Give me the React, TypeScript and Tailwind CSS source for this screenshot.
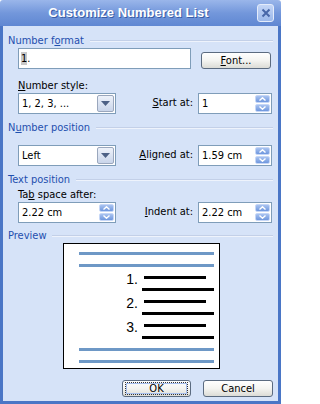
import React from 'react';

const font = { fontFamily: '"DejaVu Sans Condensed", "DejaVu Sans", Tahoma, sans-serif' };

const Heading: React.FC<{ children: React.ReactNode; className?: string }> = ({ children, className }) => (
  <div className={`flex items-center h-[13px] pl-[5px] pr-[5px] ${className ?? ''}`}>
    <span className="text-[#1f4fae] leading-[13px] whitespace-nowrap">{children}</span>
    <div className="flex-1 ml-[6px] border-t border-[#c3d0e8] border-b border-b-[#eef3fc]" />
  </div>
);

const Chevron: React.FC<{ up?: boolean }> = ({ up }) => (
  <svg width="7" height="4" viewBox="0 0 7 4" className="block">
    <path d={up ? 'M0.5 3.5 L3.5 0.8 L6.5 3.5' : 'M0.5 0.5 L3.5 3.2 L6.5 0.5'} stroke="white" strokeWidth="1.4" fill="none" />
  </svg>
);

const Spin: React.FC<{ value: string; className?: string }> = ({ value, className }) => (
  <div className={`flex h-[21px] bg-white border border-[#7f9db9] ${className ?? ''}`}>
    <div className="flex-1 pl-[3px] leading-[19px] text-black">{value}</div>
    <div className="flex flex-col w-[15px] my-[1px] mr-[1px] gap-[1px]">
      <div className="flex-1 flex items-center justify-center rounded-[2px] bg-gradient-to-b from-[#a9c3f0] to-[#6f97de] border border-[#c6d7f7]">
        <Chevron up />
      </div>
      <div className="flex-1 flex items-center justify-center rounded-[2px] bg-gradient-to-b from-[#a9c3f0] to-[#6f97de] border border-[#c6d7f7]">
        <Chevron />
      </div>
    </div>
  </div>
);

const Combo: React.FC<{ value: string }> = ({ value }) => (
  <div className="flex w-[98px] h-[21px] bg-white border border-[#7f9db9]">
    <div className="flex-1 pl-[3px] leading-[19px] text-black">{value}</div>
    <div className="w-[17px] m-[1px] flex items-center justify-center rounded-[2px] border border-[#9aa7bd] bg-gradient-to-b from-[#eef2fa] to-[#c9d5ea]">
      <svg width="9" height="5" viewBox="0 0 9 5" className="block">
        <path d="M0 0 L9 0 L4.5 5 Z" fill="#4d6185" />
      </svg>
    </div>
  </div>
);

const Button: React.FC<{ children: React.ReactNode; focus?: boolean; className?: string }> = ({ children, focus, className }) => (
  <div className={`h-[17px] rounded-[3px] border border-[#5b6b80] bg-gradient-to-b from-white via-[#f4f4f1] to-[#dcdcd6] flex items-center justify-center ${className ?? ''}`}>
    {focus ? (
      <div className="w-[calc(100%-4px)] h-[13px] border border-dotted border-[#333] flex items-center justify-center leading-[11px] text-black shadow-[inset_0_0_0_1px_#a8c0ee]">
        {children}
      </div>
    ) : (
      <span className="leading-[11px] text-black">{children}</span>
    )}
  </div>
);

const U: React.FC<{ children: React.ReactNode }> = ({ children }) => <span className="underline underline-offset-1">{children}</span>;

export default function App() {
  return (
    <div className="w-[281px] h-[404px] flex flex-col text-[11px] text-black select-none" style={font}>
      <div className="h-[26px] flex items-center bg-gradient-to-b from-[#9ab6ea] via-[#7397db] to-[#5f87d2] rounded-t-[3px]">
        <div className="flex-1 text-center font-bold text-white text-[13px] [text-shadow:1px_1px_0_#3a5da5]" style={{ fontFamily: '"Liberation Sans", Arial, sans-serif' }}>
          Customize Numbered List
        </div>
        <div className="w-[17px] h-[18px] mr-[7px] rounded-[3px] border border-[#e4ecfb] bg-gradient-to-b from-[#c3d5f6] to-[#9bb8ea] flex items-center justify-center">
          <svg width="10" height="10" viewBox="0 0 10 10" className="block">
            <path d="M1.5 1.5 L8.5 8.5 M8.5 1.5 L1.5 8.5" stroke="#4867a8" strokeWidth="2" />
          </svg>
        </div>
      </div>
      <div className="flex-1 flex flex-col bg-[#d6e3f8] border-x-[3px] border-b-[3px] border-[#4a76c6]">
        <Heading className="mt-[8px]">Number f<U>o</U>rmat</Heading>
        <div className="flex items-start mt-[1px]">
          <div className="ml-[15px] w-[173px] h-[21px] bg-white border border-[#7f9db9] pl-[2px] leading-[19px]">
            <span className="bg-[#c8c8c8]">1</span>.
          </div>
          <Button className="ml-[10px] mt-[4px] w-[70px]"><U>F</U>ont...</Button>
        </div>
        <div className="ml-[15px] mt-[10px] h-[13px] leading-[13px]"><U>N</U>umber style:</div>
        <div className="flex items-center mt-[1px] ml-[15px] mr-[6px]">
          <Combo value="1, 2, 3, ..." />
          <div className="flex-1 flex items-center justify-end">
            <span className="mr-[5px]"><U>S</U>tart at:</span>
            <Spin value="1" className="w-[74px]" />
          </div>
        </div>
        <Heading className="mt-[7px]">N<U>u</U>mber position</Heading>
        <div className="flex items-center mt-[11px] ml-[15px] mr-[6px]">
          <Combo value="Left" />
          <div className="flex-1 flex items-center justify-end">
            <span className="mr-[5px]"><U>A</U>ligned at:</span>
            <Spin value="1.59 cm" className="w-[74px]" />
          </div>
        </div>
        <Heading className="mt-[7px]">Text position</Heading>
        <div className="ml-[15px] mt-[2px] h-[13px] leading-[13px]">Ta<U>b</U> space after:</div>
        <div className="flex items-center mt-[1px] ml-[15px] mr-[6px]">
          <Spin value="2.22 cm" className="w-[98px]" />
          <div className="flex-1 flex items-center justify-end">
            <span className="mr-[5px]"><U>I</U>ndent at:</span>
            <Spin value="2.22 cm" className="w-[74px]" />
          </div>
        </div>
        <Heading className="mt-[6px]">Preview</Heading>
        <div className="ml-[60px] mt-[1px] w-[157px] h-[126px] bg-white border border-black flex flex-col pl-[15px]">
          <div className="w-[135px] h-[3px] mt-[8px] bg-[#6e98c6]" />
          <div className="w-[135px] h-[3px] mt-[9px] bg-[#6e98c6]" />
          {[1, 2, 3].map((n) => (
            <div key={n} className="flex flex-col mt-[9px]">
              <div className="flex items-center h-[3px]">
                <span className="w-[59px] text-right text-[14px] leading-[14px] mt-[3px]" style={{ fontFamily: '"Liberation Sans", Arial, sans-serif' }}>{n}.</span>
                <div className="ml-[6px] w-[62px] h-[3px] bg-black" />
              </div>
              <div className="ml-[63px] w-[72px] h-[3px] mt-[9px] bg-black" />
            </div>
          ))}
          <div className="w-[135px] h-[3px] mt-[9px] bg-[#6e98c6]" />
          <div className="w-[135px] h-[3px] mt-[9px] bg-[#6e98c6]" />
        </div>
        <div className="flex justify-end mt-[11px] mr-[5px] gap-[12px]">
          <Button focus className="w-[69px]">OK</Button>
          <Button className="w-[70px]">Cancel</Button>
        </div>
      </div>
    </div>
  );
}
